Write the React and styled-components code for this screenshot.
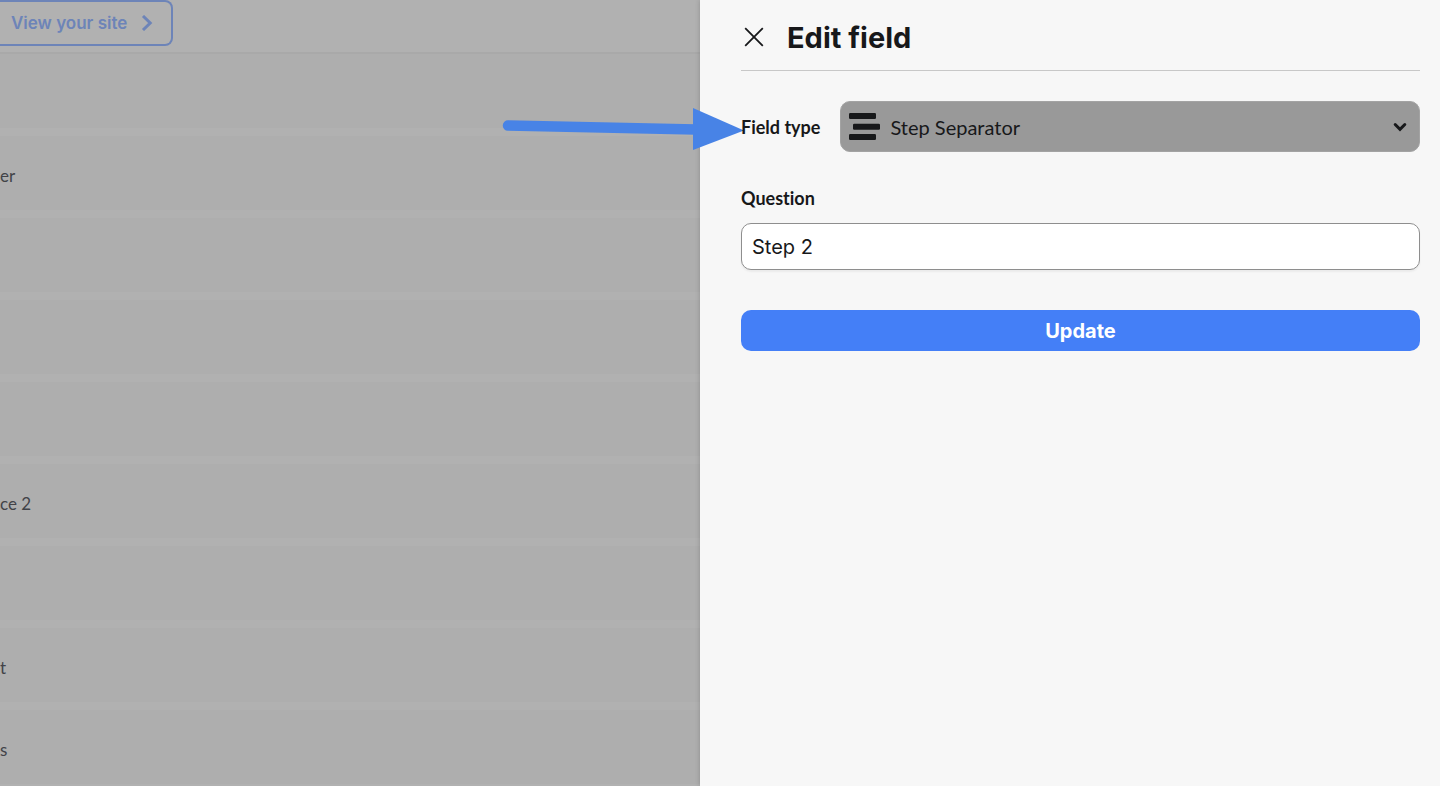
import React, { useState } from 'react'
import styled, { createGlobalStyle } from 'styled-components'

const rows = [
  { id: 1, label: '' },
  { id: 2, label: 'er' },
  { id: 3, label: '' },
  { id: 4, label: '' },
  { id: 5, label: '' },
  { id: 6, label: 'ce 2' },
  { id: 7, label: '' },
  { id: 8, label: 't' },
  { id: 9, label: 's' },
];

const App = () => {
  const [question, setQuestion] = useState('Step 2');

  return (
    <Page>
      <GlobalStyle />
      <Backdrop>
        <TopBar>
          <SiteLink href="#site">
            View your site
            <svg width="12" height="16" viewBox="0 0 12 16" fill="none">
              <path d="M2 1L9.2 8L2 15" stroke="currentColor" strokeWidth="3" />
            </svg>
          </SiteLink>
        </TopBar>
        <FieldList>
          {rows.map(row => <FieldItem key={row.id}>{row.label}</FieldItem>)}
        </FieldList>
      </Backdrop>

      <Drawer>
        <DrawerHead>
          <CloseButton type="button" aria-label="Close">
            <svg width="20" height="20" viewBox="0 0 20 20" fill="none">
              <path d="M1.2 1.2L18.8 18.8M18.8 1.2L1.2 18.8" stroke="currentColor" strokeWidth="1.8" />
            </svg>
          </CloseButton>
          <h1>Edit field</h1>
        </DrawerHead>

        <form onSubmit={e => e.preventDefault()}>
          <TypeRow>
            <Arrow width="248" height="44" viewBox="0 0 248 44" aria-hidden="true">
              <path d="M10 18.5L198 22.5" stroke="currentColor" strokeWidth="10.5" strokeLinecap="round" />
              <path d="M195 1L246 23.5L195 43Z" fill="currentColor" />
            </Arrow>
            <Label htmlFor="type">Field type</Label>
            <SelectBox>
              <Select id="type" defaultValue="step">
                <option value="step">Step Separator</option>
              </Select>
              <TypeIcon width="32" height="28" viewBox="0 0 32 28">
                <rect x="0" y="0" width="27" height="6" rx="1.2" />
                <rect x="4" y="10.7" width="27" height="6" rx="1.2" />
                <rect x="0" y="21" width="27" height="6" rx="1.2" />
              </TypeIcon>
              <Chevron width="14" height="10" viewBox="0 0 14 10" fill="none">
                <path d="M2.2 2.5L7 7.3L11.8 2.5" stroke="currentColor" strokeWidth="3" strokeLinecap="round" />
              </Chevron>
            </SelectBox>
          </TypeRow>

          <Question>
            <Label htmlFor="question">Question</Label>
            <Input
              id="question"
              type="text"
              value={question}
              onChange={e => setQuestion(e.target.value)}
            />
          </Question>

          <UpdateButton type="submit">Update</UpdateButton>
        </form>
      </Drawer>
    </Page>
  );
}


const GlobalStyle = createGlobalStyle`
  * {
    box-sizing: border-box;
  }
  body {
    margin: 0;
    color: #17181a;
    font-family: Lato, sans-serif;
    font-variant-ligatures: none;
  }
`;

const Page = styled.div`
  display: grid;
  grid-template-columns: minmax(0, 35fr) minmax(0, 37fr);
  height: 100vh;
  overflow: hidden;
`;

const Backdrop = styled.main`
  min-height: 0;
  overflow: hidden;
  background-color: #b1b1b1;
`;

const TopBar = styled.header`
  display: flex;
  align-items: flex-start;
  height: 54px;
  border-bottom: 2px solid #a9a9a9;
`;

const SiteLink = styled.a`
  display: flex;
  align-items: center;
  gap: 14px;
  height: 46px;
  padding: 0 18px 0 11px;
  border: 2px solid #6d84b8;
  border-left: none;
  border-radius: 0 8px 8px 0;
  color: #6d84b8;
  font-family: Inter, sans-serif;
  font-size: 17px;
  font-weight: 600;
  text-decoration: none;
`;

const FieldList = styled.ul`
  display: flex;
  flex-direction: column;
  gap: 8px;
  margin: 0;
  padding: 0;
  list-style: none;
`;

const FieldItem = styled.li`
  display: flex;
  flex-shrink: 0;
  align-items: center;
  height: 74px;
  padding-top: 4px;
  background-color: #aeaeae;
  color: #424348;
  font-size: 17px;
`;

const Drawer = styled.aside`
  position: relative;
  padding: 0 20px 0 41px;
  background-color: #f7f7f7;
  box-shadow: 0 0 5px rgba(0, 0, 0, 0.2);
`;

const DrawerHead = styled.div`
  display: flex;
  align-items: center;
  gap: 20px;
  height: 71px;
  padding-top: 4px;
  border-bottom: 1px solid #c8c8c8;

  h1 {
    margin: 0;
    font-family: Inter, sans-serif;
    font-size: 29px;
    font-weight: 700;
  }
`;

const CloseButton = styled.button`
  display: flex;
  padding: 3px;
  border: none;
  background: none;
  color: #17181a;
  cursor: pointer;
`;

const TypeRow = styled.div`
  position: relative;
  display: flex;
  align-items: center;
  gap: 20px;
  margin-top: 30px;
`;

/* pointer that comes in over the dimmed page */
const Arrow = styled.svg`
  position: absolute;
  top: 6px;
  right: calc(100% - 5px);
  color: #4883e6;
  pointer-events: none;
`;

const Label = styled.label`
  position: relative;
  font-size: 18px;
  font-weight: 700;
  line-height: 24px;
  white-space: nowrap;
`;

const SelectBox = styled.div`
  display: grid;
  flex: 1;
  align-items: center;

  > * {
    grid-area: 1 / 1;
  }
`;

const Select = styled.select`
  width: 100%;
  height: 51px;
  padding: 0 40px 0 49px;
  border: 1px solid #a3a3a3;
  border-radius: 10px;
  appearance: none;
  background-color: #999;
  color: #17181a;
  font-family: Lato, sans-serif;
  font-size: 20px;
`;

const TypeIcon = styled.svg`
  margin-left: 9px;
  fill: #17181a;
  pointer-events: none;
`;

const Chevron = styled.svg`
  justify-self: end;
  margin-right: 13px;
  pointer-events: none;
`;

const Question = styled.div`
  display: flex;
  flex-direction: column;
  gap: 13px;
  margin-top: 34px;
`;

const Input = styled.input`
  width: 100%;
  height: 47px;
  padding: 0 10px;
  border: 1px solid #8e8e8e;
  border-radius: 10px;
  background-color: #fff;
  box-shadow: 0 2px 2px rgba(0, 0, 0, 0.05);
  color: #17181a;
  font-family: Inter, sans-serif;
  font-size: 20px;
`;

const UpdateButton = styled.button`
  width: 100%;
  height: 41px;
  margin-top: 40px;
  border: none;
  border-radius: 10px;
  background-color: #447ff7;
  color: #fff;
  font-family: Inter, sans-serif;
  font-size: 20px;
  font-weight: 700;
  cursor: pointer;
`;

export default App
